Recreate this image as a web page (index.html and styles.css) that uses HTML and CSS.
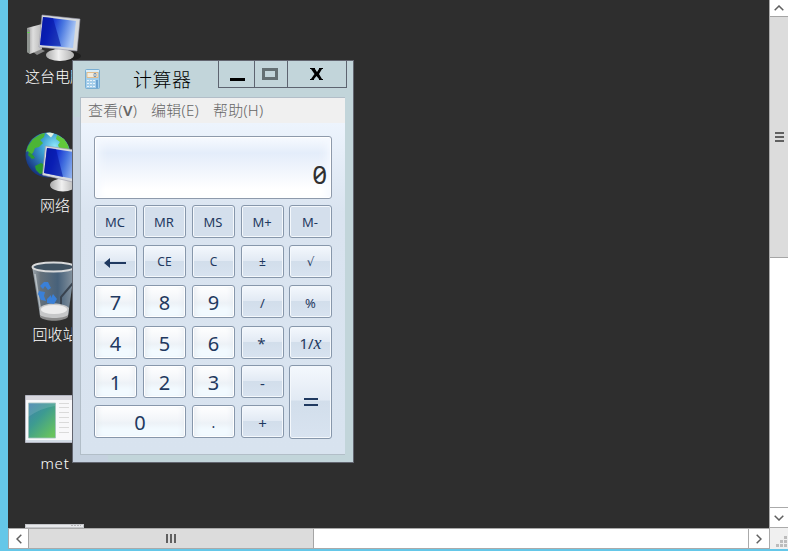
FILE: index.html
```html
<!DOCTYPE html>
<html lang="zh-CN">
<head>
<meta charset="utf-8">
<title>计算器</title>
<link rel="stylesheet" href="styles.css">
</head>
<body>
<div class="viewer">
  <main class="desktop">
    <div class="icons">
      <div class="icon">
        <svg viewBox="23 0 64 66">
          <defs>
            <linearGradient id="screen" x1="0" x2="1" y2=".25"><stop offset="0" stop-color="#0616a8"/><stop offset=".28" stop-color="#0a26c8"/><stop offset=".34" stop-color="#102bd0"/><stop offset=".65" stop-color="#4876e0"/><stop offset="1" stop-color="#a9c6f5"/></linearGradient>
            <linearGradient id="metal" x1="0" x2="1"><stop offset="0" stop-color="#aaa"/><stop offset=".45" stop-color="#f0f0f0"/><stop offset="1" stop-color="#b0b0b0"/></linearGradient>
            <linearGradient id="tower" x1="0" x2="1"><stop offset="0" stop-color="#989898"/><stop offset=".4" stop-color="#dedede"/><stop offset="1" stop-color="#b8b8b8"/></linearGradient>
          </defs>
          <path d="M33 52l8-3 4 2-8 4z" fill="#888"/>
          <path d="M27 28l15-4v25l-12 5-3-2z" fill="url(#tower)"/>
          <path d="M27 28l3 2v24l-3-2z" fill="#8e9490"/><path d="M27.5 32.500h2" stroke="#51e83b"/>
          <ellipse cx="64" cy="56" rx="17" ry="5" fill="#1f1f1f"/>
          <path d="M55 45l13 3 1 7H54z" fill="#a9abad"/>
          <ellipse cx="60" cy="55" rx="14" ry="6" fill="url(#metal)"/>
          <path d="M42 15l38 4-3 32-38-4z" fill="#d6d9dc" stroke="#99a" stroke-width=".6"/>
          <path d="M43 17l33 4-3 27-33-3z" fill="url(#screen)"/>
          <path d="M43 17l10 1 8 28-21-1z" fill="#0718a4" opacity=".65"/>
        </svg>
        <span>这台电脑</span>
      </div>
      <div class="icon">
        <svg viewBox="23 0 64 66">
          <defs><radialGradient id="sea" cx=".65" cy=".3" r=".75"><stop offset="0" stop-color="#8ce6fa"/><stop offset=".4" stop-color="#3c9fd2"/><stop offset="1" stop-color="#16327e"/></radialGradient></defs>
          <circle cx="48" cy="26" r="22.500" fill="url(#sea)"/>
          <path d="M28 17l5-7 8-5 4-1-1 4-4 3 3 3-4 4-4 1-2 5-3 2-2-4-2 1z" fill="#4cb535"/>
          <path d="M29 23l4 3 2 3-3 1-4-4zM35 37l6-3 4 2-1 8-4 1-4-4z" fill="#2a9a30"/>
          <path d="M57 6l7 4 4 6 2 8-5-4-5 1-2-5 2-3-4-3z" fill="#62c93b"/>
          <path d="M46 4l4-.5 4 1-3 4z" fill="#e1f2e1"/>
          <path d="M58 48l12 3v5H58z" fill="#aaa"/>
          <ellipse cx="63" cy="56" rx="13" ry="6.500" fill="url(#metal)"/>
          <path d="M45.500 17l38 5-2 33-39-9z" fill="#d8dbdf" stroke="#99a" stroke-width=".6"/>
          <path d="M47 19l34 5-2 27-35-7z" fill="url(#screen)"/>
          <path d="M47 19l9 1 7 28-19-4z" fill="#0718a4" opacity=".65"/>
        </svg>
        <span>网络</span>
      </div>
      <div class="icon">
        <svg viewBox="23 0 64 66">
          <defs><linearGradient id="glass" x1="0" x2="1"><stop offset="0" stop-color="#a0a8ae"/><stop offset=".2" stop-color="#65717b"/><stop offset=".6" stop-color="#47617a"/><stop offset="1" stop-color="#8c98a2"/></linearGradient></defs>
          <path d="M32 8h43l-7 50c-4 5-24 5-28 0z" fill="url(#glass)"/>
          <path d="M35 16l6 39" stroke="#cfd5d9" stroke-width="1.500" opacity=".7"/>
          <path d="M73 25L61 39v9" fill="none" stroke="#39434f" stroke-width="2"/>
          <path d="M39.500 50c5-6 24-6 29.500 0l-1 8c-4 5-23 5-28 0z" fill="#c6c7c8"/>
          <ellipse cx="54" cy="51.500" rx="13" ry="4.500" fill="#ececec"/>
          <path d="M40 57c5 4 24 4 28 0v2c-5 5-23 5-28 0z" fill="#8c8c8c"/>
          <ellipse cx="53.500" cy="9" rx="21" ry="4.500" fill="#405261" stroke="#d9dadb" stroke-width="2"/>
          <path d="M40 28l4-4h4l3 6-3 2-3-4-2 3zM39 33l6 1-1 4 2 5-5-1-3-6zM47 45v-4l4-4v3l2-4 4 5-3 5z" fill="#3a80d8"/>
        </svg>
        <span>回收站</span>
      </div>
      <div class="icon">
        <svg viewBox="23 0 64 66">
          <defs>
            <linearGradient id="photo" x1="0" y1="0" x2=".8" y2="1"><stop offset="0" stop-color="#417fae"/><stop offset=".45" stop-color="#3d9b91"/><stop offset="1" stop-color="#68c45d"/></linearGradient>
          </defs>
          <path d="M25.500 8.500h58v47h-58z" fill="#f8f8fa" stroke="#b3b5c1"/>
          <path d="M26 9h57v4H26z" fill="#d9d8df"/><path d="M26 53h57v2H26z" fill="#d3dce5"/>
          <path d="M28.500 16h27v35h-27z" fill="url(#photo)" stroke="#9fc0bd" stroke-width=".8"/>
          <path d="M28 16h27v3q-14 2-27 11z" fill="#fff" opacity=".13"/>
          <path d="M59 16.500h10m-10 4h10m-10 5h10m-10 5h10m-10 5h10m-10 5h10m-10 5h10" stroke="#dadada"/>
        </svg>
        <span class="latin">met</span>
      </div>
      <div class="icon">
        <svg viewBox="23 0 64 66">
          <path d="M25 8h59v50H25z" fill="#c4c6ca"/><path d="M26 9h57v2H26z" fill="#e8e9eb"/><path d="M71 9.500h10" stroke="#b4b4b8" stroke-dasharray="2 1"/>
        </svg>
      </div>
    </div>

    <section class="window">
      <header class="titlebar">
        <svg class="app-icon" viewBox="0 0 15 20">
          <rect x=".5" y=".5" width="14" height="19" rx="1" fill="#a4cfec" stroke="#79aed3"/>
          <path d="M1 1h13v2H1z" fill="#d9edf9"/><path d="M2 3.500h11v5H2z" fill="#f4ecdc" stroke="#e6b577" stroke-width=".8"/>
          <path d="M9 4.500h2v3H9z" fill="none" stroke="#557ca5" stroke-width=".7"/>
          <path d="M2 12h8m-8 3h8m-8 3h8" stroke="#e8f4fc" stroke-width="2" stroke-dasharray="2 1"/>
          <path d="M2.500 12.500h7m-7 3h7m-7 3h7" stroke="#6ba3d0" stroke-dasharray="1 2"/>
          <path d="M11 11h2v8h-2z" fill="#6da3d2"/>
        </svg>
        <h1>计算器</h1>
        <div class="controls">
          <button class="min" aria-label="最小化"><svg width="15" height="14"><path d="M0 9h15v3H0z"/></svg></button>
          <button class="max" aria-label="最大化"><svg width="16" height="12"><path d="M1.500 1.500h13v9h-13z" fill="none" stroke="#647073" stroke-width="3"/></svg></button>
          <button class="close" aria-label="关闭"><svg width="14" height="12"><path d="M0 0h5v1l2 3 2-3V0h4v1h-1L9 6l3 5h1v1H9V11L6.500 8 4 11v1H0v-1h1l3.500-5L1 1H0z"/></svg></button>
        </div>
      </header>
      <div class="client">
        <nav class="menu"><span>查看(<b>V</b>)</span><span>编辑(E)</span><span>帮助(H)</span></nav>
        <div class="calc">
          <div class="display">0</div>
          <div class="keys">
            <button class="mem">MC</button><button class="mem">MR</button><button class="mem">MS</button><button class="mem">M+</button><button class="mem">M-</button>
            <button class="back" aria-label="退格"><svg width="22" height="12"><path d="M0 6l6-5v4h16v2H6v4z" fill="#1f3960"/></svg></button><button>CE</button><button>C</button><button>±</button><button class="root">√</button>
            <button class="num">7</button><button class="num">8</button><button class="num">9</button><button class="slash">/</button><button class="slash">%</button>
            <button class="num">4</button><button class="num">5</button><button class="num">6</button><button class="sym star">*</button><button class="recip">1/<i>x</i></button>
            <button class="num">1</button><button class="num">2</button><button class="num">3</button><button class="sym">-</button><button class="equals" aria-label="等于"><svg width="14" height="8"><path d="M0 0h14v2H0zM0 6h14v2H0z" fill="#1f3960"/></svg></button>
            <button class="num zero">0</button><button class="num point">.</button><button class="sym">+</button>
          </div>
        </div>
      </div>
    </section>
  </main>

  <div class="vbar">
    <div class="step"><svg width="10" height="6"><path d="M.7 5.300L5 1l4.300 4.300"/></svg></div>
    <div class="thumb"><svg width="9" height="11"><path d="M0 1h9M0 5h9M0 9h9"/></svg></div>
    <div class="track"></div>
    <div class="step"><svg width="10" height="6"><path d="M.7.700L5 5 9.300.700"/></svg></div>
  </div>
  <div class="hbar">
    <div class="step"><svg width="6" height="10"><path d="M5.300.700L1 5l4.300 4.300"/></svg></div>
    <div class="thumb"><svg width="11" height="9"><path d="M1 0v9M5 0v9M9 0v9"/></svg></div>
    <div class="track"></div>
    <div class="step"><svg width="6" height="10"><path d="M.7.700L5 5 .7 9.300"/></svg></div>
  </div>
  <div class="corner"><svg width="12" height="13"><path d="M8 0h3v3H8zM4 4h3v3H4zM8 4h3v3H8zM0 8h3v3H0zM4 8h3v3H4zM8 8h3v3H8z" fill="#bcbcbc"/></svg></div>
</div>
</body>
</html>
```

FILE: styles.css
```css
* { box-sizing: border-box; }
body {
  margin: 0;
  overflow: hidden;
  background: #65c7e8;
  font-family: "Noto Sans", "Noto Sans CJK SC", sans-serif;
}
svg { display: block; flex: none; }
button { margin: 0; padding: 0; border: 0; font: inherit; display: flex; align-items: center; justify-content: center; }

.viewer {
  display: grid;
  grid-template: 528px 21px / 761px 19px;
  width: 788px;
  height: 551px;
  padding-left: 8px;
}
.desktop { position: relative; overflow: hidden; background: #2e2e2e; }
.icons { display: flex; flex-direction: column; width: 64px; margin-left: 15px; }
.icon { flex: none; height: 129px; display: flex; flex-direction: column; align-items: center; }
.icon svg { width: 64px; height: 66px; }
.icon span {
  font: 300 15px/20px "Noto Sans CJK SC", sans-serif;
  color: #fff;
  white-space: nowrap;
}
.icon .latin { font-family: "Noto Sans", sans-serif; letter-spacing: .8px; }

.window {
  position: absolute;
  left: 64px;
  top: 60px;
  width: 282px;
  height: 403px;
  padding: 0 8px 7px;
  border: 1px solid #62656f;
  background: linear-gradient(90deg, #c5d1df 0 34px, #c2d5da 36px) bottom / 100% 345px no-repeat, #c2d5da;
}
.titlebar { display: flex; height: 36px; padding-left: 4px; }
.app-icon { width: 15px; height: 20px; margin-top: 8px; }
h1 { margin: 5px 0 0 33px; font: 300 19px/26px "Noto Sans CJK SC", sans-serif; letter-spacing: .5px; color: #000; }
.controls { display: flex; width: 129px; height: 27px; margin: 0 -2px 0 auto; border: 1px solid #5d6470; border-top: 0; }
.controls button { background: none; }
.controls .min { width: 36px; padding: 4px 0 0 2px; border-right: 1px solid #5d6470; }
.controls .max { width: 33px; padding-right: 2px; border-right: 1px solid #5d6470; }
.controls .close { flex: 1; }

.client { height: 358px; border: 1px solid #b2bec8; border-width: 1px 0 1px 1px; margin-left: -1px; }
.menu {
  display: flex;
  gap: 14px;
  height: 25px;
  padding-left: 7px;
  background: #f0f0f0;
  font: 300 15px/25px "Noto Sans", "Noto Sans CJK SC", sans-serif;
  letter-spacing: .25px;
  color: #666;
  white-space: nowrap;
}
.menu b { font-weight: 600; }
.calc { height: 331px; padding: 13px 13px 0; background: linear-gradient(#edf4fd, #dae4f0 90px, #d8e3ef); }
.display {
  display: flex;
  align-items: flex-end;
  justify-content: flex-end;
  width: 238px;
  height: 63px;
  padding-right: 4px;
  border: 1px solid #8e9aab;
  border-radius: 3px;
  background: linear-gradient(#f7faff 0, #e4edfa 16px, #fff 52px);
  box-shadow: inset 0 0 0 1px #fff, inset -8px 0 10px -4px #f5f9ff, inset 8px 0 10px -4px #f5f9ff;
  font: 26px/48px "Noto Sans", sans-serif;
  font-feature-settings: "zero";
  color: #303030;
}
.keys {
  display: grid;
  grid-template: 40px 40px 41px 39px 40px 34px / 49px 49px 49px 48px 43px;
  align-items: start;
  margin-top: 6px;
}
.keys button {
  width: 43px;
  height: 33px;
  border: 1px solid #8797ab;
  border-radius: 3px;
  background: linear-gradient(#f4f8fd, #e2eaf4 47%, #d2deeb 50%, #d8e3f0);
  box-shadow: inset 0 0 0 1px #f4f8fc;
  color: #1f3960;
  font-size: 12px;
  line-height: 18px;
}
.keys .mem { background: #d4dfec; font-size: 13px; padding-right: 1px; }
.keys .back { padding: 2px 2px 0 0; }
.keys .root { font-family: "DejaVu Sans", sans-serif; }
.keys .slash { font-size: 13px; padding-top: 2px; }
.keys .num {
  padding-top: 3px;
  background: linear-gradient(#fff, #f2f5f9 45%, #edf2f7 55%, #f2faff 75%);
  box-shadow: inset 0 0 0 1px #fff, inset 5px 0 7px -4px #dfe4eb, inset -5px 0 7px -4px #e5eaf0;
  font-size: 20px;
}
.keys .sym { font-size: 15px; padding-top: 3px; }
.keys .star { padding: 0 2px 0 0; }
.keys .recip { font-size: 15px; }
.recip i { font-family: "Liberation Serif", serif; font-size: 18px; }
.keys .equals { grid-row: span 2; height: 74px; background: linear-gradient(#f4f8fd, #e2eaf4 47%, #d2deeb 49%, #d8e3f0); }
.keys .zero { grid-column: span 2; width: 92px; }
.keys .point { font-size: 14px; }

.vbar, .hbar { display: flex; background: #fff; }
.vbar { flex-direction: column; border-left: 1px solid #aaa; }
.hbar { border: 1px solid #aaa; border-width: 1px 0; }
.step, .thumb { display: flex; align-items: center; justify-content: center; }
.step path, .thumb path { fill: none; stroke: #606060; stroke-width: 1.5; }
.thumb path { stroke-width: 2; }
.thumb { background: #dcdcdc; }
.track { flex: 1; }
.vbar .step { height: 16px; }
.vbar .step:last-child { height: 21px; border-top: 1px solid #aaa; border-bottom: 1px solid #aaa; }
.vbar .thumb { height: 242px; border: 1px solid #a5a5a5; border-width: 1px 0; }
.hbar .step { width: 20px; border-left: 1px solid #aaa; }
.hbar .thumb { width: 286px; border: 1px solid #a5a5a5; border-width: 0 1px; }
.hbar .step:last-child { width: 21px; }
.corner { display: flex; align-items: flex-end; justify-content: flex-end; background: #f0f0f0; border-left: 1px solid #aaa; }
```
